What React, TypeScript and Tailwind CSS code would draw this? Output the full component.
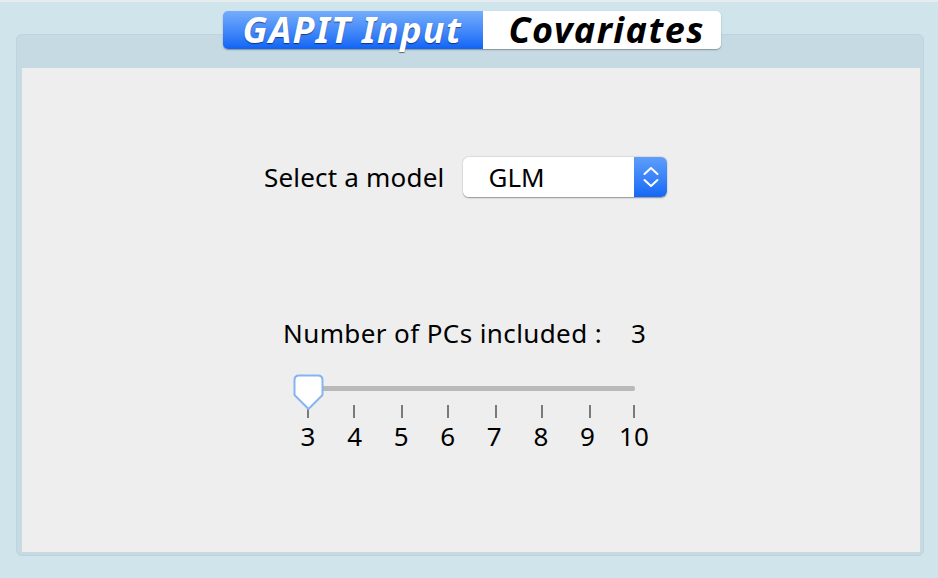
import React from "react";

const ticks = [15, 61, 109, 155, 203, 249, 297, 341];
const labels = ["3", "4", "5", "6", "7", "8", "9", "10"];

export default function App() {
  return (
    <div className="w-[938px] h-[578px] bg-[#d0e4ec] font-['Noto_Sans','DejaVu_Sans',sans-serif] text-black overflow-hidden flex flex-col">
      <div className="h-[2px] bg-[#e7ecee]" />
      {/* tabs */}
      <div className="relative z-10 mt-[9px] flex justify-center pl-[5px]">
        <div className="flex h-[38px] rounded-[5px] shadow-[0_1px_1.5px_rgba(0,0,0,0.35)]">
          <div className="w-[260px] h-full rounded-l-[5px] bg-gradient-to-b from-[#74adfc] to-[#0e64f5] pl-[20px] text-white text-[36px] font-bold italic tracking-[1.3px] leading-[38px] [text-shadow:0_1px_1px_rgba(0,0,40,0.55)] whitespace-nowrap">
            GAPIT Input
          </div>
          <div className="w-[238px] h-full rounded-r-[5px] bg-white pl-[26px] text-black text-[36px] font-bold italic tracking-[1.5px] leading-[38px] whitespace-nowrap">
            Covariates
          </div>
        </div>
      </div>
      {/* panel */}
      <div className="mt-[-15px] ml-[16px] w-[908px] h-[522px] rounded-[6px] bg-[#c6dae3] border border-[#bfd3dc] pt-[33px] pl-[5px] pr-[3px] pb-[3px] flex">
        <div className="flex-1 bg-[#eeeeee] flex flex-col items-start pt-[89px]">
          {/* select row */}
          <div className="ml-[242px] flex items-center h-[40px]">
            <span className="text-[26px] leading-[40px] tracking-[0.2px] whitespace-nowrap">Select a model</span>
            <div className="ml-[19px] flex h-[40px] w-[204px] rounded-[6px] shadow-[0_0.5px_1.5px_rgba(0,0,0,0.4)]">
              <div className="flex-1 bg-white rounded-l-[6px] pl-[25px] text-[26px] leading-[40px]">GLM</div>
              <div className="w-[33px] rounded-r-[6px] bg-gradient-to-b from-[#5d9efb] to-[#1467f6] flex items-center justify-center">
                <svg width="16" height="24" viewBox="0 0 16 24" fill="none">
                  <path d="M1.5 9 L8 3 L14.5 9" stroke="white" strokeWidth="2" strokeLinecap="round" strokeLinejoin="round" />
                  <path d="M1.5 15 L8 21 L14.5 15" stroke="white" strokeWidth="2" strokeLinecap="round" strokeLinejoin="round" />
                </svg>
              </div>
            </div>
          </div>
          {/* number label */}
          <div className="ml-[261px] mt-[121px] h-[30px] flex text-[26px] leading-[30px] whitespace-nowrap">
            <span className="tracking-[0.4px]">Number of PCs included :</span>
            <span className="ml-[29px]">3</span>
          </div>
          {/* slider */}
          <div className="ml-[271px] mt-[26px] w-[356px] flex flex-col">
            <svg width="356" height="44" viewBox="0 0 356 44">
              <rect x="8" y="12" width="334" height="5" rx="2" fill="#b9b9b9" />
              {ticks.map((x) => (
                <line key={x} x1={x} y1="31" x2={x} y2="44" stroke="#7a7a7a" strokeWidth="2" />
              ))}
              <path
                d="M1.5 6 Q1.5 1.5 6 1.5 H25 Q29.5 1.5 29.5 6 V21 L15.5 35 L1.5 21 Z"
                fill="white"
                stroke="#86b3f2"
                strokeWidth="2"
                strokeLinejoin="round"
              />
            </svg>
            <div className="mt-[3px] flex justify-between h-[30px]">
              {labels.map((l) => (
                <span key={l} className="w-[30px] text-center text-[26px] leading-[30px]">
                  {l}
                </span>
              ))}
            </div>
          </div>
        </div>
      </div>
    </div>
  );
}
